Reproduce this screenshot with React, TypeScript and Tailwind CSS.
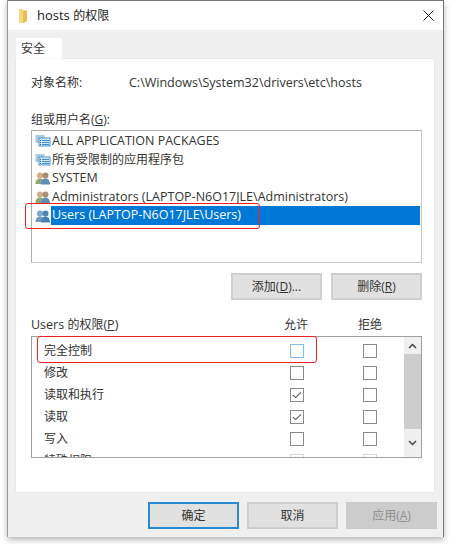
const font = "font-['Open_Sans','Noto_Sans_CJK_SC',sans-serif]"

const principals = [
  { name: "ALL APPLICATION PACKAGES", icon: "package" },
  { name: "所有受限制的应用程序包", icon: "package", cjk: true },
  { name: "SYSTEM", icon: "user" },
  { name: "Administrators (LAPTOP-N6O17JLE\\Administrators)", icon: "user" },
  { name: "Users (LAPTOP-N6O17JLE\\Users)", icon: "user", selected: true },
]

const permissions = [
  { name: "完全控制", allow: false, focus: true },
  { name: "修改", allow: false },
  { name: "读取和执行", allow: true },
  { name: "读取", allow: true },
  { name: "写入", allow: false },
  { name: "特殊权限", allow: false, faded: true },
]

function PackageIcon() {
  return (
    <svg width="16" height="16" viewBox="0 0 16 16" className="shrink-0">
      <rect x="0.5" y="2" width="9" height="8" fill="#a9c9e2" />
      <rect x="3.5" y="4.5" width="12" height="9" fill="#4d97d4" />
      <rect x="4.5" y="5.5" width="10" height="7" fill="#d5e8f7" />
      <path d="M7 7.5h7M7 9.5h7M7 11.5h7" stroke="#3b8ccc" strokeWidth="1" />
      <path d="M5 7.5h1M5 9.5h1M5 11.5h1" stroke="#1f5f9c" strokeWidth="1" />
    </svg>
  )
}

function UserIcon({ blue }: { blue?: boolean }) {
  return (
    <svg width="16" height="16" viewBox="0 0 16 16" className="shrink-0">
      <circle cx="5" cy="5.5" r="3" fill={blue ? "#7ba7c9" : "#cdb083"} />
      <path d="M.5 14c0-4 2-5.500 4.500-5.500S9 10 9 14z" fill={blue ? "#6f9cc0" : "#8fa878"} />
      <circle cx="10.500" cy="5.500" r="3" fill={blue ? "#4f84b0" : "#a98f78"} />
      <path d="M6 14.500c0-4 2-6 4.500-6s4.500 2 4.500 6z" fill={blue ? "#4a80b4" : "#5f8db5"} />
    </svg>
  )
}

function FolderIcon() {
  return (
    <svg width="10" height="15" viewBox="0 0 10 15">
      <path d="M0 1h3l1 1h4v11l-4 2H0z" fill="#f4d77e" />
      <path d="M4 3h4v10l-4 2z" fill="#e9bf52" />
    </svg>
  )
}

function CheckBox({ checked, focus, faded }: { checked?: boolean; focus?: boolean; faded?: boolean }) {
  const border = focus ? "border-[#7fbdf0]" : faded ? "border-[#d8d8d8]" : "border-[#8a8a8a]"
  return (
    <span className={`flex h-[14px] w-[14px] items-center justify-center border-[1.5px] bg-white ${border}`}>
      {checked && (
        <svg width="10" height="8" viewBox="0 0 10 8">
          <path d="M1 4.2 3.600 6.600 9 1.400" fill="none" stroke="#555" strokeWidth="1.1" />
        </svg>
      )}
    </span>
  )
}

function Btn({ label, primary, disabled }: { label: React.ReactNode; primary?: boolean; disabled?: boolean }) {
  const look = primary
    ? "border-2 border-[#2a8ad4] bg-[#e1e1e1] text-[#333]"
    : disabled
      ? "border-2 border-[#cccccc] bg-[#cccccc] text-[#8f8f8f]"
      : "border-2 border-[#cfcfcf] bg-[#e1e1e1] text-[#333]"
  return <button className={`flex h-[27px] w-[91px] items-center justify-center text-[12px] ${look}`}>{label}</button>
}

export default function App() {
  return (
    <div className={`relative h-[544px] w-[451px] overflow-hidden bg-white pl-[7px] text-[12.5px] text-[#333] ${font}`}>
      <div className="flex h-[537px] w-[437px] flex-col border-l border-r border-t border-l-[#9a9a9a] border-r-[#777] border-t-[#777] shadow-[0_3px_6px_rgba(0,0,0,0.28)]">
        {/* title bar */}
        <div className="flex h-[29px] shrink-0 items-center bg-white pl-[11px] pr-[9px]">
          <FolderIcon />
          <span className="ml-2 text-[13px] text-[#222]">
            hosts <span className="text-[12px]">的权限</span>
          </span>
          <svg width="11" height="11" viewBox="0 0 11 11" className="ml-auto">
            <path d="M.5.5l10 10M10.500.5l-10 10" stroke="#222" strokeWidth="1" />
          </svg>
        </div>

        <div className="flex min-h-0 flex-1 flex-col bg-[#f0f0f0] pl-[8px] pr-[9px]">
          {/* tab */}
          <div className="mt-2 flex h-[21px] w-[46px] shrink-0 items-center bg-white pl-[5px] text-[12px]">安全</div>

          <div className="flex h-[433px] shrink-0 flex-col bg-white pl-[15px] pr-[13px] shadow-[0_0_1px_rgba(0,0,0,0.2)]">
            <div className="mt-[15px] flex h-[18px] items-center">
              <span className="w-[98px] text-[12px]">对象名称:</span>
              <span>C:\Windows\System32\drivers\etc\hosts</span>
            </div>

            <div className="mt-[19px] flex h-[18px] items-center">
              <span className="text-[12px]">
                组或用户名(<span className="underline">G</span>):
              </span>
            </div>

            <div className="mt-px h-[133px] w-[391px] border border-[#adadad] border-r-[#c8c8c8] border-b-[#c8c8c8] bg-white pl-[3px] pr-px pt-[1px]">
              {principals.map((p) => (
                <div key={p.name} className="flex h-[18.6px] items-center whitespace-nowrap">
                  {p.icon === "package" ? <PackageIcon /> : <UserIcon blue={p.selected} />}
                  <span
                    className={
                      p.selected
                        ? "flex h-[18.6px] flex-1 items-center bg-[#0078d7] pl-px text-white"
                        : p.cjk
                          ? "pl-px text-[12px]"
                          : "pl-px"
                    }
                  >
                    {p.name}
                  </span>
                </div>
              ))}
            </div>

            <div className="mt-[10px] flex w-[391px] justify-end gap-[9px]">
              <Btn
                label={
                  <>
                    添加(<span className="underline">D</span>)...
                  </>
                }
              />
              <Btn
                label={
                  <>
                    删除(<span className="underline">R</span>)
                  </>
                }
              />
            </div>

            <div className="mt-[16px] flex h-[18px] w-[391px] items-center text-[12px]">
              <span className="w-[253px] text-[12.5px]">
                Users <span className="text-[12px]">的权限</span>(<span className="underline">P</span>)
              </span>
              <span className="w-[74px]">允许</span>
              <span>拒绝</span>
            </div>

            <div className="mt-[2px] flex h-[122px] w-[391px] overflow-hidden border border-[#a0a0a0] bg-white">
              <div className="min-w-0 flex-1 overflow-hidden pt-[3px] text-[12px]">
                {permissions.map((p) => (
                  <div key={p.name} className="flex h-[22px] items-center">
                    <span className="w-[258px] shrink-0 pl-[12px]">{p.name}</span>
                    <CheckBox checked={p.allow} focus={p.focus} faded={p.faded} />
                    <span className="w-[59px]" />
                    <CheckBox faded={p.faded} />
                  </div>
                ))}
              </div>
              <div className="flex w-[17px] shrink-0 flex-col bg-[#f0f0f0]">
                <div className="flex h-[17px] items-center justify-center">
                  <svg width="9" height="6" viewBox="0 0 9 6">
                    <path d="M1 5 4.500 1.500 8 5" fill="none" stroke="#444" strokeWidth="1.5" />
                  </svg>
                </div>
                <div className="h-[75px] bg-[#cdcdcd]" />
                <div className="flex flex-1 items-center justify-center">
                  <svg width="9" height="6" viewBox="0 0 9 6">
                    <path d="M1 1 4.500 4.500 8 1" fill="none" stroke="#444" strokeWidth="1.5" />
                  </svg>
                </div>
              </div>
            </div>
          </div>

          {/* footer */}
          <div className="mr-[-3px] mt-[10px] flex justify-end gap-[8px]">
            <Btn label="确定" primary />
            <Btn label="取消" />
            <Btn
              disabled
              label={
                <>
                  应用(<span className="underline">A</span>)
                </>
              }
            />
          </div>
        </div>
      </div>

      {/* red annotation boxes */}
      <div className="absolute left-[25px] top-[203px] h-[26px] w-[235px] rounded-[3px] border border-[#f02020]" />
      <div className="absolute left-[37px] top-[336px] h-[27px] w-[280px] rounded-[3px] border border-[#f02020]" />
    </div>
  )
}
